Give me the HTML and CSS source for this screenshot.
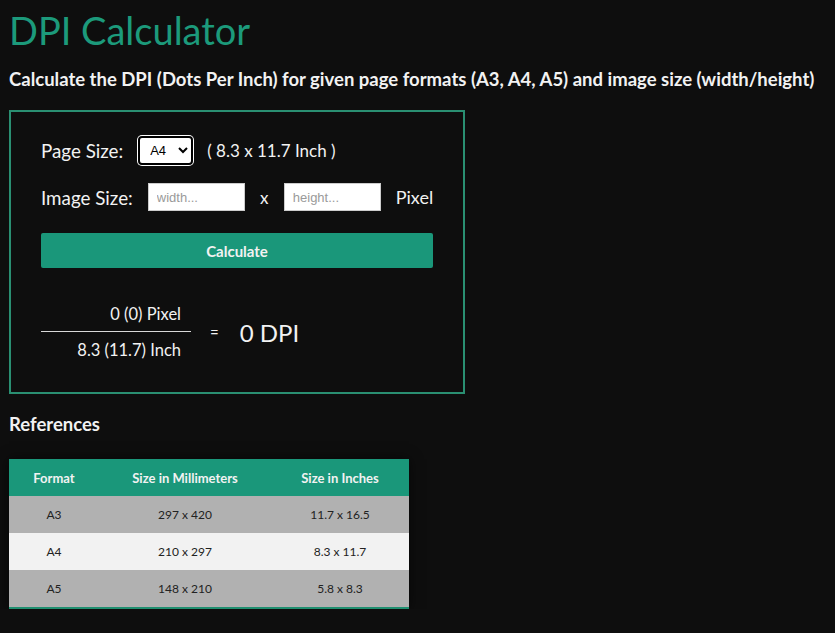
FILE: index.html
```html
<!DOCTYPE html>
<html lang="en">
<head>
<meta charset="utf-8">
<title>DPI Calculator</title>
<link rel="stylesheet" href="styles.css">
</head>
<body>
<h1 class="title">DPI Calculator</h1>
<p class="subtitle">Calculate the DPI (Dots Per Inch) for given page formats (A3, A4, A5) and image size (width/height)</p>

<div class="calc">
  <div class="row">
    <span class="label">Page Size:</span>
    <select class="select"><option>A3</option><option selected>A4</option><option>A5</option></select>
    <span class="info">( 8.3 x 11.7 Inch )</span>
  </div>
  <div class="row">
    <span class="label">Image Size:</span>
    <input class="field" type="text" placeholder="width...">
    <span class="times">x</span>
    <input class="field" type="text" placeholder="height...">
    <span class="unit">Pixel</span>
  </div>
  <button class="btn" type="button">Calculate</button>
  <div class="result">
    <div class="fraction">
      <div class="num">0 (0) Pixel</div>
      <div class="den">8.3 (11.7) Inch</div>
    </div>
    <span class="eq">=</span>
    <span class="dpi">0 DPI</span>
  </div>
</div>

<h2 class="refs">References</h2>
<table class="table">
  <thead>
    <tr><th class="c1">Format</th><th class="c2">Size in Millimeters</th><th class="c3">Size in Inches</th></tr>
  </thead>
  <tbody>
    <tr class="dark"><td>A3</td><td>297 x 420</td><td>11.7 x 16.5</td></tr>
    <tr class="light"><td>A4</td><td>210 x 297</td><td>8.3 x 11.7</td></tr>
    <tr class="dark"><td>A5</td><td>148 x 210</td><td>5.8 x 8.3</td></tr>
  </tbody>
</table>
</body>
</html>
```
FILE: styles.css
```css
body {
  margin: 0;
  padding: 0 9px;
  background: #0e0e0e;
  color: #f2f2f2;
  font-family: Lato, "Open Sans", sans-serif;
}
.title {
  margin: 8px 0 0;
  font-size: 38px;
  line-height: 44px;
  font-weight: 400;
  color: #1c9a7b;
}
.subtitle {
  margin: 15px 0 0;
  font-size: 18.5px;
  line-height: 24px;
  font-weight: 700;
}
.calc {
  margin-top: 19px;
  width: 392px;
  border: 2px solid #2a8f72;
  padding: 22px 30px 30px;
}
.row {
  display: flex;
  align-items: center;
  gap: 15px;
  height: 32px;
  font-size: 17px;
  white-space: nowrap;
}
.row > * {
  flex-shrink: 0;
}
.row + .row {
  margin-top: 15px;
}
.label {
  font-size: 18.8px;
}
.select {
  width: 55px;
  height: 29px;
  border: 2px solid #000;
  border-radius: 4px;
  box-shadow: 0 0 0 1px #fff;
  background: #fff;
  color: #000;
  font-family: "Liberation Sans", Arial, sans-serif;
  font-size: 13px;
  padding: 0 2px 0 6px;
}
.info {
  margin-left: -1px;
}
.field {
  box-sizing: border-box;
  width: 97px;
  height: 28px;
  border: 1px solid #ccc;
  background: #fff;
  padding: 0 8px;
  font-family: "Liberation Sans", Arial, sans-serif;
  font-size: 13px;
}
.field::placeholder {
  color: #9a9a9a;
}
.times {
  width: 9px;
  text-align: center;
}
.unit {
  font-size: 18px;
}
.btn {
  display: block;
  width: 100%;
  height: 35px;
  margin-top: 20px;
  border: 0;
  border-radius: 2px;
  background: #1a977a;
  color: #f2f2f2;
  font-family: Lato, "Open Sans", sans-serif;
  font-size: 15px;
  font-weight: 700;
}
.result {
  display: flex;
  align-items: center;
  margin-top: 34px;
}
.fraction {
  width: 150px;
  text-align: right;
  font-size: 16.5px;
}
.num {
  line-height: 24px;
  padding: 0 10px 5px 0;
  border-bottom: 1px solid #d8d8d8;
}
.den {
  line-height: 24px;
  padding: 6px 10px 0 0;
}
.eq {
  margin-left: 19px;
  font-size: 15px;
}
.dpi {
  margin-left: 21px;
  font-size: 24px;
  font-weight: 400;
}
.refs {
  margin: 18px 0 0;
  font-size: 18.5px;
  line-height: 24px;
  font-weight: 700;
}
.table {
  margin-top: 23px;
  width: 400px;
  border-collapse: collapse;
  font-size: 12px;
  text-align: center;
  box-shadow: 0 0 12px rgba(0, 0, 0, 0.6);
  border-bottom: 2px solid #1f8f70;
}
.table th {
  height: 37px;
  padding: 0;
  background: #1a977a;
  color: #f2f2f2;
  font-size: 13px;
  font-weight: 700;
}
.table td {
  height: 37px;
  padding: 0;
  color: #222;
}
.c1 { width: 90px; }
.c2 { width: 172px; }
.c3 { width: 138px; }
.dark td { background: #b1b1b1; }
.light td { background: #f2f2f2; }
```
